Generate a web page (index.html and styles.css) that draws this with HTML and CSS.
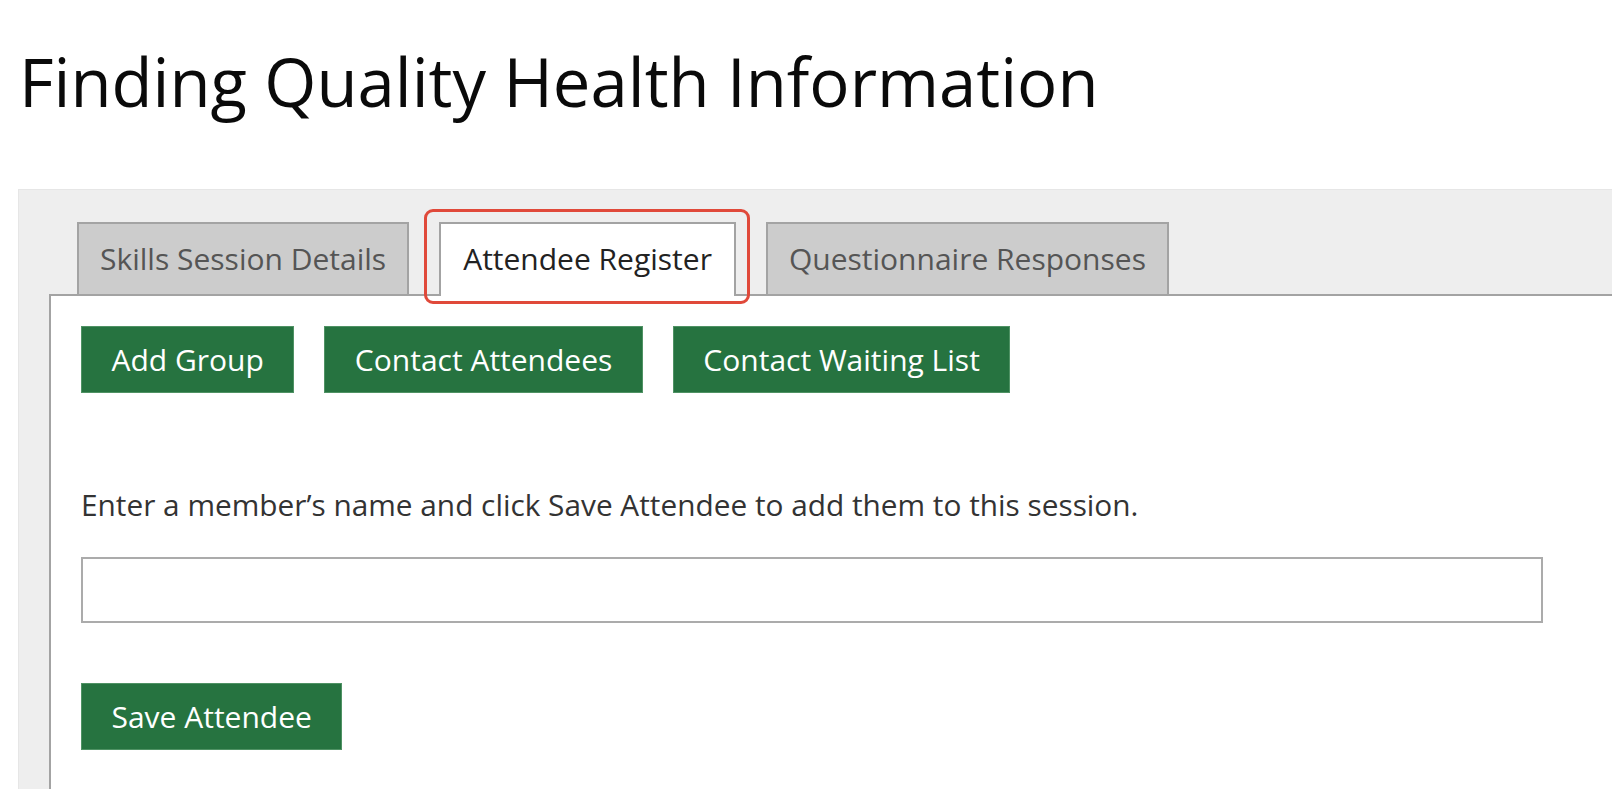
FILE: index.html
```html
<!DOCTYPE html>
<html lang="en">
<head>
<meta charset="utf-8">
<title>Finding Quality Health Information</title>
<link rel="stylesheet" href="styles.css">
</head>
<body>
  <h1 class="page-title">Finding Quality Health Information</h1>
  <div class="panel">
    <div class="tabs">
      <div class="tab">Skills Session Details</div>
      <div class="tab tab-active">Attendee Register<span class="highlight"></span></div>
      <div class="tab">Questionnaire Responses</div>
    </div>
    <div class="content">
      <div class="actions">
        <button class="btn">Add Group</button>
        <button class="btn">Contact Attendees</button>
        <button class="btn">Contact Waiting List</button>
      </div>
      <p class="hint">Enter a member’s name and click Save Attendee to add them to this session.</p>
      <input class="name-input" type="text">
      <div class="save-row">
        <button class="btn">Save Attendee</button>
      </div>
    </div>
  </div>
</body>
</html>
```

FILE: styles.css
```css
html, body {
  margin: 0;
  padding: 0;
  background: #ffffff;
  overflow: hidden;
}
body {
  font-family: "Open Sans", "Liberation Sans", sans-serif;
  color: #222;
  width: 1612px;
}
.page-title {
  margin: 41px 0 0 19px;
  font-size: 67px;
  font-weight: 400;
  line-height: 80px;
  color: #0a0a0a;
}
.panel {
  margin: 68px 0 0 18px;
  background: #eeeeee;
  padding: 32px 0 0 30px;
  border-top: 1px solid #e6e6e6;
  border-left: 1px solid #e6e6e6;
}
.tabs {
  display: flex;
  align-items: flex-start;
  gap: 30px;
  padding-left: 28px;
  height: 72px;
}
.tab {
  position: relative;
  box-sizing: border-box;
  height: 72px;
  padding: 0 21px;
  border: 2px solid #a3a3a3;
  border-bottom: none;
  background: #cccccc;
  color: #555;
  font-size: 30px;
  line-height: 70px;
  white-space: nowrap;
}
.tab-active {
  height: 74px;
  z-index: 1;
  background: #ffffff;
  color: #222;
  padding: 0 22px;
}
.highlight {
  position: absolute;
  left: -17px;
  top: -15px;
  width: 326px;
  height: 95px;
  box-sizing: border-box;
  border: 3px solid #e0493a;
  border-radius: 9px;
  pointer-events: none;
}
.content {
  background: #ffffff;
  border-top: 2px solid #a3a3a3;
  border-left: 2px solid #a3a3a3;
  padding: 30px 0 200px 30px;
}
.actions {
  display: flex;
  gap: 30px;
}
.btn {
  box-sizing: border-box;
  height: 67px;
  padding: 0 29.5px;
  background: #267340;
  border: 1px solid #4f9264;
  color: #ffffff;
  font-family: "Open Sans", "Liberation Sans", sans-serif;
  font-size: 30px;
  line-height: 65px;
  cursor: pointer;
}
.hint {
  margin: 89px 0 0 0;
  font-size: 29.8px;
  line-height: 45px;
  color: #333;
}
.name-input {
  display: block;
  box-sizing: border-box;
  margin-top: 30px;
  width: 1462px;
  height: 66px;
  border: 2px solid #ababab;
  background: #fff;
  font-family: inherit;
  font-size: 30px;
}
.save-row {
  margin-top: 60px;
}
```
